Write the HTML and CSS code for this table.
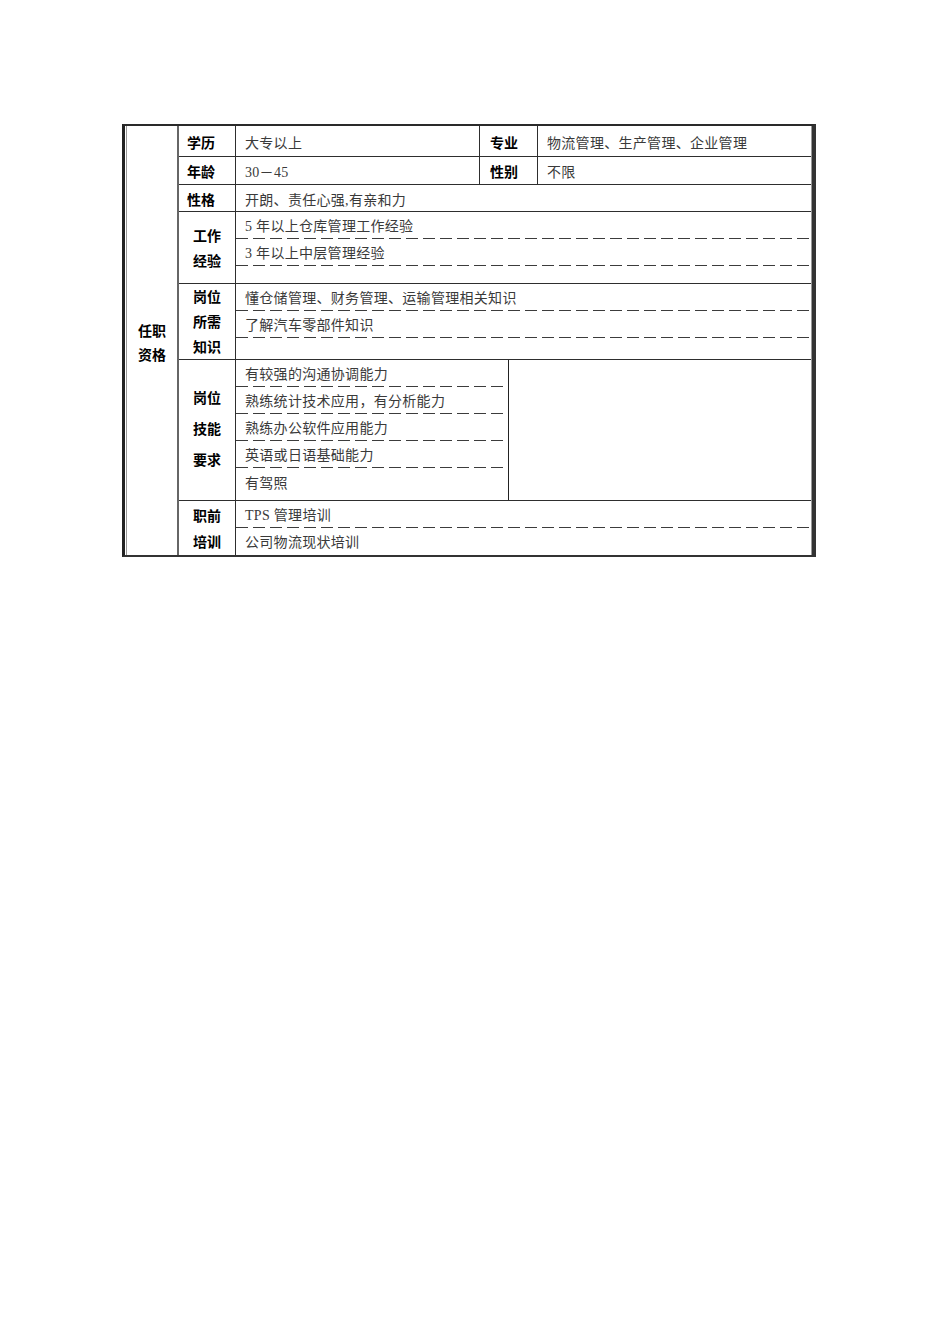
FILE: index.html
```html
<!DOCTYPE html>
<html lang="zh">
<head>
<meta charset="utf-8">
<title>任职资格</title>
<link rel="stylesheet" href="styles.css">
</head>
<body>
<div class="page">
  <div class="sheet">
    <div class="col-a"><div class="vtext">任职<br>资格</div></div>
    <div class="body">
      <div class="row r1">
        <div class="lab">学历</div>
        <div class="val v1">大专以上</div>
        <div class="lab2">专业</div>
        <div class="val grow">物流管理、生产管理、企业管理</div>
      </div>
      <div class="row r2">
        <div class="lab">年龄</div>
        <div class="val v1">30－45</div>
        <div class="lab2">性别</div>
        <div class="val grow">不限</div>
      </div>
      <div class="row r3">
        <div class="lab">性格</div>
        <div class="val grow">开朗、责任心强,有亲和力</div>
      </div>
      <div class="row">
        <div class="lab multi lh25">工作<br>经验</div>
        <div class="lines">
          <div class="ln h27 dash">5 年以上仓库管理工作经验</div>
          <div class="ln h27 dash">3 年以上中层管理经验</div>
          <div class="ln h17"></div>
        </div>
      </div>
      <div class="row">
        <div class="lab multi lh25">岗位<br>所需<br>知识</div>
        <div class="lines">
          <div class="ln h27 dash">懂仓储管理、财务管理、运输管理相关知识</div>
          <div class="ln h27 dash">了解汽车零部件知识</div>
          <div class="ln h21"></div>
        </div>
      </div>
      <div class="row">
        <div class="lab multi lh31 up">岗位<br>技能<br>要求</div>
        <div class="lines part">
          <div class="ln h27 dash">有较强的沟通协调能力</div>
          <div class="ln h27 dash">熟练统计技术应用，有分析能力</div>
          <div class="ln h27 dash">熟练办公软件应用能力</div>
          <div class="ln h27 dash">英语或日语基础能力</div>
          <div class="ln h32 up">有驾照</div>
        </div>
        <div class="blank"></div>
      </div>
      <div class="row last">
        <div class="lab multi lh26">职前<br>培训</div>
        <div class="lines">
          <div class="ln h27 dash">TPS 管理培训</div>
          <div class="ln h27">公司物流现状培训</div>
        </div>
      </div>
    </div>
  </div>
</div>
</body>
</html>
```

FILE: styles.css
```css
* { box-sizing: border-box; }
html, body { margin: 0; padding: 0; background: #fff; }
.page {
  padding: 124px 0 0 122px;
}
.sheet {
  display: flex;
  width: 694px;
  border-top: 2px solid #2a2a2a;
  border-bottom: 2px solid #333;
  border-left: 3px solid #222;
  border-right: 4px solid #333;
  padding-left: 1px;
  font-family: "Liberation Serif", "Noto Sans CJK SC", serif;
  font-size: 14px;
  color: #3a3a3a;
}
.col-a {
  width: 53px;
  border-left: 1px solid #999;
  border-right: 2px solid #666;
  display: flex;
  align-items: center;
  justify-content: center;
  padding-top: 3px;
}
.vtext {
  font-family: "Noto Sans CJK SC", sans-serif;
  font-weight: bold;
  color: #000;
  line-height: 24px;
  font-size: 14px;
}
.body {
  width: 633px;
  border-right: 1px solid #999;
}
.row {
  display: flex;
  border-bottom: 1px solid #2e2e2e;
}
.row.last { border-bottom: none; }
.r1 { height: 31px; }
.r2 { height: 28px; }
.r3 { height: 27px; }
.lab, .lab2 {
  font-family: "Noto Sans CJK SC", sans-serif;
  font-weight: bold;
  color: #000;
  display: flex;
  align-items: center;
  border-right: 1px solid #2e2e2e;
  padding-top: 2px;
}
.r2 .lab, .r2 .lab2 { padding-top: 0; }
.lab { width: 57px; padding-left: 8px; }
.lab2 { width: 58px; padding-left: 10px; }
.lab.multi {
  padding-left: 0;
  padding-top: 0;
  justify-content: center;
  text-align: center;
}
.lab.multi.up { padding-bottom: 4px; }
.lh25 { line-height: 25px; }
.lh31 { line-height: 31px; }
.lh26 { line-height: 26px; }
.val {
  display: flex;
  align-items: center;
  padding-left: 9px;
  padding-top: 1px;
  letter-spacing: 0.3px;
}
.v1 { width: 244px; border-right: 1px solid #2e2e2e; }
.grow { flex: 1; }
.lines {
  flex: 1;
  display: flex;
  flex-direction: column;
}
.lines.part {
  flex: 0 0 273px;
  border-right: 1px solid #222;
}
.blank { flex: 1; }
.ln {
  display: flex;
  align-items: center;
  padding-left: 9px;
  padding-bottom: 1px;
  letter-spacing: 0.3px;
}
.ln.up { padding-bottom: 4px; }
.dash {
  background-image: repeating-linear-gradient(90deg, #3c3c3c 0 12px, transparent 12px 17px);
  background-size: 100% 1px;
  background-position: left bottom;
  background-repeat: no-repeat;
}
.h27 { height: 27px; }
.h17 { height: 17px; }
.h21 { height: 21px; }
.h32 { height: 32px; }
```
